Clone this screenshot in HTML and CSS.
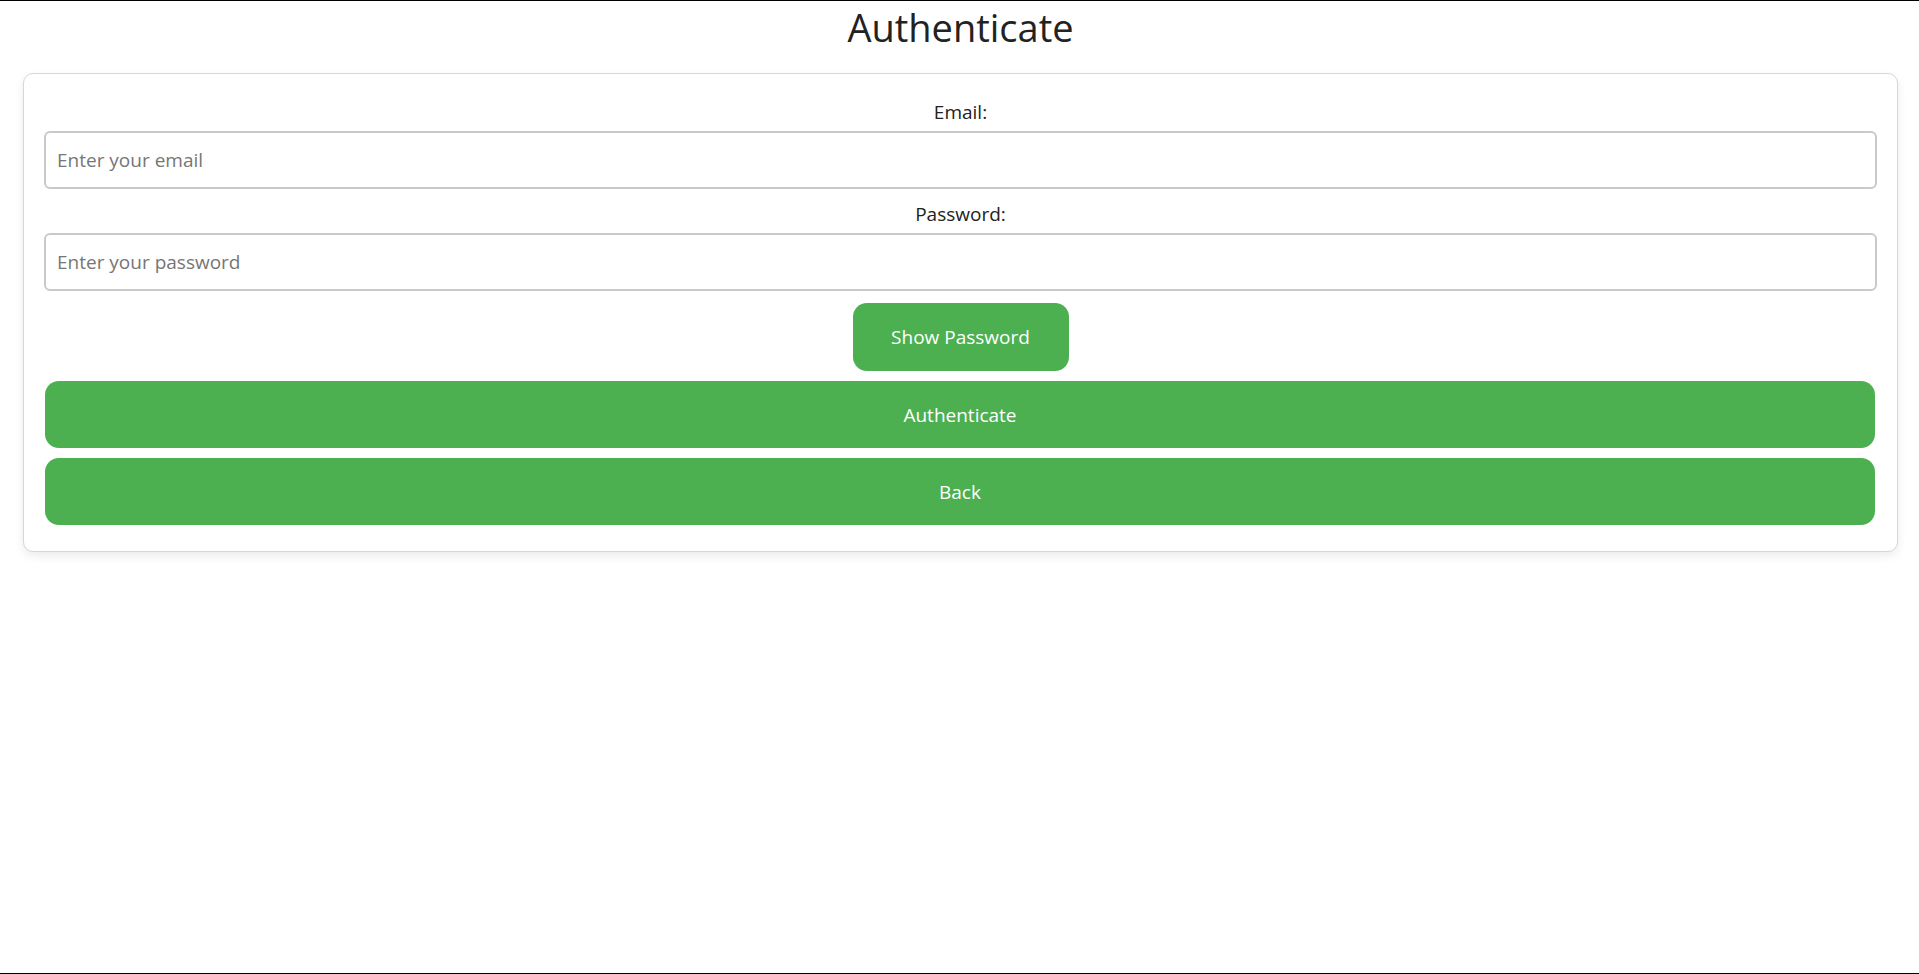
FILE: index.html
```html
<!DOCTYPE html>
<html lang="en">
<head>
<meta charset="utf-8">
<title>Authenticate</title>
<link rel="stylesheet" href="styles.css">
</head>
<body>
<div class="page">
  <h1 class="title">Authenticate</h1>
  <form class="card">
    <label class="label" for="email">Email:</label>
    <input class="field" id="email" type="email" placeholder="Enter your email">
    <label class="label" for="password">Password:</label>
    <input class="field" id="password" type="password" placeholder="Enter your password">
    <div class="center">
      <button type="button" class="btn btn-small">Show Password</button>
    </div>
    <button type="button" class="btn btn-wide">Authenticate</button>
    <button type="button" class="btn btn-wide">Back</button>
  </form>
</div>
</body>
</html>
```

FILE: styles.css
```css
* { box-sizing: border-box; }
html, body { margin: 0; padding: 0; background: #fff; }
body {
  font-family: "Open Sans", "Noto Sans", "Liberation Sans", sans-serif;
  color: #222;
  font-size: 20px;
}
.page {
  height: 974px;
  border-top: 1px solid #000;
  border-bottom: 1px solid #000;
  padding: 0 21px 0 23px;
}
.title {
  margin: 0 0 19px;
  font-size: 38px;
  font-weight: 400;
  line-height: 53px;
  text-align: center;
  color: #222;
}
.card {
  display: flex;
  flex-direction: column;
  border: 1px solid #d6d6d6;
  border-radius: 10px;
  padding: 25px 20px 26px;
  box-shadow: 0 4px 10px rgba(0, 0, 0, 0.08);
  background: #fff;
}
.label {
  display: block;
  text-align: center;
  font-size: 19px;
  line-height: 27px;
  margin-bottom: 5px;
  color: #222;
}
.field {
  display: block;
  width: 100%;
  height: 58px;
  border: 2px solid #c9c9c9;
  border-radius: 6px;
  padding: 0 11px;
  font-family: inherit;
  font-size: 19px;
  color: #222;
  margin-bottom: 12px;
  outline: none;
}
.field::placeholder { color: #767676; }
.center { display: flex; justify-content: center; }
.btn {
  background: #4caf50;
  color: #fff;
  border: none;
  border-radius: 14px;
  font-family: inherit;
  font-size: 19px;
  line-height: 28px;
  cursor: pointer;
}
.btn-small {
  width: 216px;
  height: 68px;
  padding: 0;
  margin-bottom: 10px;
}
.btn-wide {
  height: 67px;
  margin: 0 2px 10px 1px;
}
.btn-wide:last-child { margin-bottom: 0; }
```
